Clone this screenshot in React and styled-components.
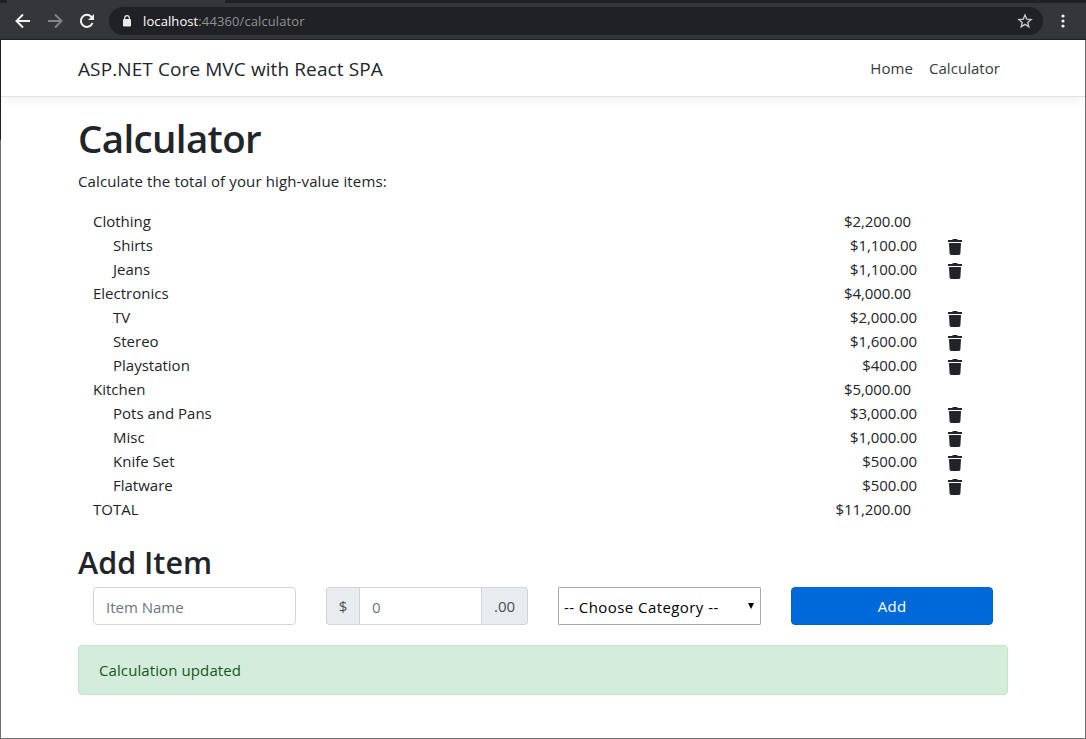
import React from "react";
import styled, { createGlobalStyle } from "styled-components";

const GlobalStyle = createGlobalStyle`
  *, *::before, *::after { box-sizing: border-box; }
  body {
    margin: 0;
    background: #fff;
    color: #212529;
    font-family: "Open Sans", "Noto Sans", sans-serif;
    font-size: 15px;
    font-weight: 400;
    line-height: 24px;
    overflow: hidden;
  }
  h1, h2, p { margin: 0; }
`;

const Window = styled.div`
  display: flex;
  flex-direction: column;
  width: 1086px;
  height: 739px;
`;

const TabStrip = styled.div`
  display: flex;
  height: 3px;
  background: #202124;
`;

const ActiveTab = styled.div`
  width: 218px;
  margin-left: 7px;
  background: #35363a;
`;

const Toolbar = styled.div`
  display: flex;
  align-items: center;
  height: 37px;
  padding: 0 14px 0 15px;
  background: #35363a;
  border-bottom: 1px solid #202124;
`;

const ToolIcon = styled.svg`
  display: block;
  flex: none;
  width: 16px;
  height: 16px;
  margin-right: 16px;
`;

const AddressBar = styled.div`
  display: flex;
  align-items: center;
  width: 934px;
  height: 28px;
  margin-left: -2px;
  padding: 0 10px 0 13px;
  border-radius: 14px;
  background: #202124;
  font-size: 13px;
`;

const LockIcon = styled.svg`
  flex: none;
  width: 10px;
  height: 12px;
  margin-right: 11px;
`;

const Url = styled.span`
  flex: 1;
  color: #8d9196;
  letter-spacing: 0.1px;
`;

const Host = styled.span`
  color: #fff;
`;

const StarIcon = styled.svg`
  flex: none;
  width: 16px;
  height: 16px;
`;

const MenuIcon = styled.svg`
  flex: none;
  width: 4px;
  height: 14px;
  margin-left: 18px;
`;

const Page = styled.div`
  flex: 1;
  border: 1px solid #6f6f70;
  border-top: 0;
  border-left: 0;
  display: flex;
`;

const WindowEdge = styled.div`
  flex: none;
  width: 1px;
  background: linear-gradient(#202124 100px, #6f6f70 100px);
`;

const Content = styled.div`
  flex: 1;
`;

const Navbar = styled.header`
  display: flex;
  align-items: center;
  height: 57px;
  padding: 0 85px 0 77px;
  border-bottom: 1px solid #dee2e6;
  box-shadow: 0 4px 12px rgba(0, 0, 0, 0.05);
`;

const Brand = styled.span`
  flex: 1;
  padding-top: 1px;
  font-size: 19px;
  letter-spacing: 0.1px;
`;

const NavLink = styled.a`
  margin-left: 16px;
  color: #343a40;
  letter-spacing: 0.05px;
`;

const Main = styled.main`
  width: 930px;
  margin-left: 77px;
  padding-top: 17px;
`;

const Title = styled.h1`
  font-size: 38.5px;
  font-weight: 600;
  line-height: 48px;
  letter-spacing: -0.65px;
`;

const Intro = styled.p`
  margin-top: 7px;
  margin-bottom: 16px;
  letter-spacing: 0.13px;
`;

const Row = styled.div`
  display: flex;
  height: 24px;
  padding-left: ${(p) => (p.$item ? 35 : 15)}px;
`;

const Name = styled.span`
  flex: 1;
`;

const Amount = styled.span`
  text-align: right;
  margin-right: ${(p) => (p.$item ? 31 : 97)}px;
  letter-spacing: -0.1px;
`;

const TrashButton = styled.button`
  display: block;
  width: 14px;
  height: 16px;
  margin: 6px 46px 0 0;
  padding: 0;
  border: 0;
  background: none;
  color: #212529;
`;

const TrashSvg = styled.svg`
  display: block;
`;

const Subtitle = styled.h2`
  margin-top: 22px;
  font-size: 30.5px;
  font-weight: 600;
  line-height: 38px;
`;

const Form = styled.div`
  display: grid;
  grid-template-columns: 203px 202px 203px 202px;
  column-gap: 30px;
  height: 38px;
  margin: 6px 0 20px;
  padding-left: 15px;
`;

const Field = styled.div`
  flex: 1;
  display: flex;
  align-items: center;
  padding: 1px 12px 0;
  border: 1px solid #ced4da;
  border-radius: ${(p) => (p.$grouped ? 0 : 4)}px;
  color: #6c757d;
`;

const Group = styled.div`
  display: flex;
`;

const Addon = styled.div`
  display: flex;
  align-items: center;
  justify-content: center;
  width: ${(p) => (p.$end ? 46 : 33)}px;
  border: 1px solid #ced4da;
  border-width: ${(p) => (p.$end ? "1px 1px 1px 0" : "1px 0 1px 1px")};
  border-radius: ${(p) => (p.$end ? "0 4px 4px 0" : "4px 0 0 4px")};
  background: #e9ecef;
  color: #495057;
`;

const Select = styled.div`
  display: flex;
  align-items: center;
  justify-content: space-between;
  padding: 1px 6px 0 5px;
  border: 1px solid #a9a9a9;
  border-radius: 1px;
  color: #000;
  letter-spacing: 0.43px;
`;

const Caret = styled.svg`
  width: 6px;
  height: 6px;
  margin-top: -2px;
`;

const AddButton = styled.button`
  padding: 0;
  border: 1px solid #0062cc;
  border-radius: 4px;
  background: #0069d9;
  color: #fff;
  font: inherit;
  letter-spacing: 0.3px;
`;

const Alert = styled.div`
  height: 50px;
  padding: 12px 20px;
  border: 1px solid #c3e6cb;
  border-radius: 4px;
  background: #d4edda;
  color: #155724;
  letter-spacing: 0.1px;
`;

const rows = [
  ["Clothing", "$2,200.00"],
  ["Shirts", "$1,100.00", true],
  ["Jeans", "$1,100.00", true],
  ["Electronics", "$4,000.00"],
  ["TV", "$2,000.00", true],
  ["Stereo", "$1,600.00", true],
  ["Playstation", "$400.00", true],
  ["Kitchen", "$5,000.00"],
  ["Pots and Pans", "$3,000.00", true],
  ["Misc", "$1,000.00", true],
  ["Knife Set", "$500.00", true],
  ["Flatware", "$500.00", true],
  ["TOTAL", "$11,200.00"],
];

const Trash = () => (
  <TrashButton aria-label="Delete">
    <TrashSvg width="14" height="16" viewBox="0 0 14 16" fill="currentColor">
      <path d="M0 1h4.200L5 0h4l.8 1H14v2H0zM1 4h12l-.6 10.600a1.500 1.500 0 0 1-1.500 1.400H3.100a1.500 1.500 0 0 1-1.500-1.400z" />
    </TrashSvg>
  </TrashButton>
);

export default function App() {
  return (
    <Window>
      <GlobalStyle />
      <TabStrip>
        <ActiveTab />
      </TabStrip>
      <Toolbar>
        <ToolIcon viewBox="0 0 16 16" fill="none" stroke="#f1f1f1" strokeWidth="2">
          <path d="M15 8H2.500M8 1.500 1.500 8 8 14.500" />
        </ToolIcon>
        <ToolIcon viewBox="0 0 16 16" fill="none" stroke="#828387" strokeWidth="2">
          <path d="M1 8h12.500M8 1.500 14.500 8 8 14.500" />
        </ToolIcon>
        <ToolIcon viewBox="0 0 16 16" fill="none" stroke="#f1f1f1" strokeWidth="2">
          <path d="M13.500 10A6 6 0 1 1 12.300 3.800L13.500 5" />
          <path d="M15 1v6H9z" fill="#f1f1f1" stroke="none" />
        </ToolIcon>
        <AddressBar>
          <LockIcon viewBox="0 0 10 12">
            <rect x="1" y="4" width="8" height="7.500" rx="1" fill="#e8eaed" />
            <path d="M2.700 5V2.900a2.300 2.300 0 0 1 4.600 0V5" fill="none" stroke="#e8eaed" strokeWidth="1.200" />
          </LockIcon>
          <Url>
            <Host>localhost</Host>:44360/calculator
          </Url>
          <StarIcon viewBox="0 0 16 16" fill="none" stroke="#c4c5c7" strokeWidth="1.400">
            <path d="m8 2 1.700 4.100 4.400.4-3.300 2.900 1 4.300L8 11.400l-3.800 2.300 1-4.300-3.300-2.900 4.400-.4z" />
          </StarIcon>
        </AddressBar>
        <MenuIcon viewBox="0 0 4 14" fill="#f1f1f1">
          <circle cx="2" cy="2" r="1.600" />
          <circle cx="2" cy="7" r="1.600" />
          <circle cx="2" cy="12" r="1.600" />
        </MenuIcon>
      </Toolbar>
      <Page>
        <WindowEdge />
        <Content>
          <Navbar>
            <Brand>ASP.NET Core MVC with React SPA</Brand>
            <NavLink>Home</NavLink>
            <NavLink>Calculator</NavLink>
          </Navbar>
          <Main>
            <Title>Calculator</Title>
            <Intro>Calculate the total of your high-value items:</Intro>
            {rows.map(([name, amount, item]) => (
              <Row key={name} $item={item}>
                <Name>{name}</Name>
                <Amount $item={item}>{amount}</Amount>
                {item && <Trash />}
              </Row>
            ))}
            <Subtitle>Add Item</Subtitle>
            <Form>
              <Field>Item Name</Field>
              <Group>
                <Addon>$</Addon>
                <Field $grouped>0</Field>
                <Addon $end>.00</Addon>
              </Group>
              <Select>
                -- Choose Category --
                <Caret viewBox="0 0 6 6">
                  <path d="M0 0h6L3 6z" />
                </Caret>
              </Select>
              <AddButton>Add</AddButton>
            </Form>
            <Alert>Calculation updated</Alert>
          </Main>
        </Content>
      </Page>
    </Window>
  );
}
